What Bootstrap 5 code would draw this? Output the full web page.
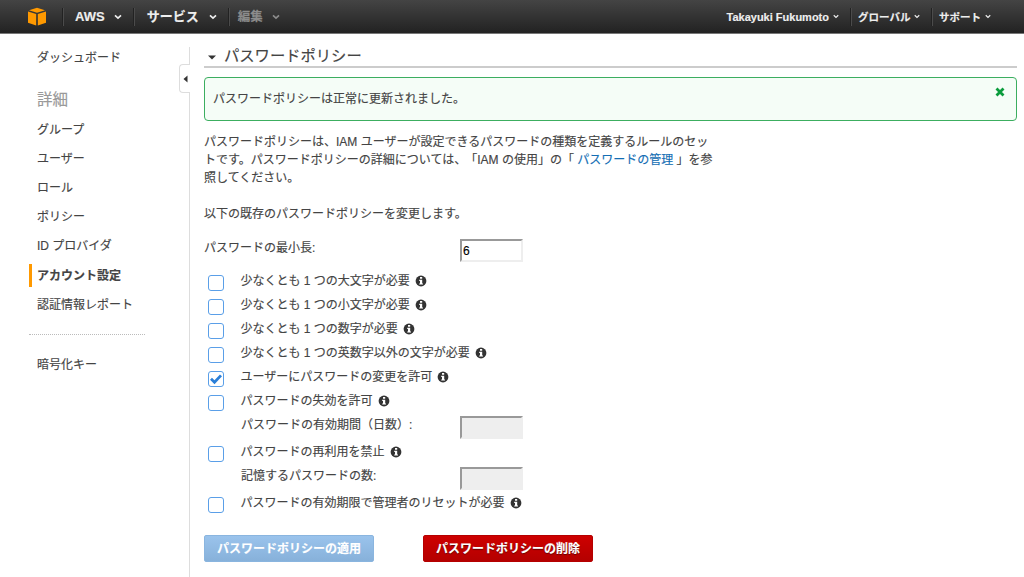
<!DOCTYPE html>
<html lang="ja">
<head>
<meta charset="utf-8">
<meta name="viewport" content="width=device-width, initial-scale=1">
<title>IAM - アカウント設定</title>
<link href="https://cdn.jsdelivr.net/npm/bootstrap@5.3.0/dist/css/bootstrap.min.css" rel="stylesheet">
<style>
body{font:12px/18px "Liberation Sans","Noto Sans CJK JP",sans-serif;color:#444;background:#fff;height:577px;overflow:hidden;-webkit-text-stroke:.15px}
.topbar{height:34px;background:linear-gradient(#444,#222);border-bottom:1px solid #777;padding:0 26px 0 27px;color:#eee;font-weight:700;flex-wrap:nowrap}
.topbar a{color:inherit;text-decoration:none;white-space:nowrap;height:18px;display:flex;align-items:center}
.logo-cell{width:35px;height:18px}
.main-link{font-size:13px;border-left:1px solid #222;box-shadow:inset 1px 0 #4b4b4b;padding-left:12px;padding-right:11px;gap:9px}
.menu-wide{padding-left:13px;gap:10px}
.acct-link{font-size:10.5px;color:#e8e8e8;gap:4px}
.acct-link:not(:first-child){border-left:1px solid #222;box-shadow:inset 1px 0 #4b4b4b;padding-left:7px;width:81px}
.acct-link:last-child{width:67px!important}
.acct-link.user{font-size:11px;padding-right:11px}
.topbar .muted{color:#8c8c8c;padding-left:9px;font-size:12.5px}
.side{width:189px;padding:14px 0 0 29px}
.side a{display:flex;align-items:center;height:29.2px;color:#444;text-decoration:none;padding-left:8px}
.side .first{height:20px;margin-bottom:21px}
.side h2{font-size:15.5px;font-weight:400;color:#999;margin:0;padding-left:8px;line-height:22px;height:24px;margin-bottom:2px}
.side .current{font-weight:700;position:relative}
.side .current::before{content:"";position:absolute;left:0;top:3px;width:3px;height:23px;background:#f90}
.side hr{width:116px;margin:15px 0 15px;border:0;border-top:1px dotted #bbb;opacity:1}
.rail{width:1px;margin-top:13px;background:#ddd;position:relative}
.collapse-tab{position:absolute;right:0;top:17px;width:11px;height:29px;border:1px solid #ddd;border-right:0;border-radius:4px 0 0 4px;background:#fff}
.panel{padding:10px 7px 0 14px}
.panel h1{font-size:15.3px;font-weight:400;line-height:22px;height:24px;margin:0 0 9px;border-bottom:2px solid #ccc;display:flex;align-items:center;color:#444}
.panel h1 span{padding-top:2px}
.notice{height:44px;border:1px solid #3cae60;border-radius:4px;background:#f5fdf7;padding:0 11px 0 8px;margin-bottom:12px;color:#444}
.line{white-space:nowrap}
.line a{color:#146eb4;text-decoration:none}
.quote-gap{margin-left:5px}
.opt{height:24px;display:flex}
.opt .box{width:16px;height:16px;margin:6px 17px 0 3.5px;flex:none;appearance:none;border:1px solid #5a9fe8;border-radius:3px;background:#fff}
.box:checked{background:#fff url("data:image/svg+xml,%3Csvg xmlns='http://www.w3.org/2000/svg' viewBox='0 0 14 14'%3E%3Cpath d='M2 6.8L5.5 10.2L12 3.4' fill='none' stroke='%232b7fd8' stroke-width='2.8'/%3E%3C/svg%3E") center/14px!important}
.opt label{line-height:18px;margin-top:3px;white-space:nowrap}
.opt svg{margin:6px 0 0 5px}
.num{width:63px;height:23px;border:2px solid;border-color:#999 #eee #eee #999;padding:1px;font-size:12px;line-height:18px;color:#000;background:#fff;border-radius:0}
.num:disabled{background:#eee}
.field-label{width:256px;flex:none}
.sub{padding-left:37px}
.sub .field-label{width:219px}
.act{width:170px;height:27px;border-radius:2px;font-weight:700;font-size:12px;line-height:18px;padding:1px 0 0;color:#fff;--bs-btn-color:#fff;text-shadow:0 1px 1px rgba(0,0,0,.5)}
.apply,.apply:disabled{background:linear-gradient(#9ac3ec,#87b1da);border:1px solid #8ab5df;color:#fff;opacity:1;text-shadow:none}
.remove{background:linear-gradient(#ce0000,#b40000);border:1px solid #b50000}
</style>
</head>
<body>
<svg class="d-none">
<symbol id="info" viewBox="0 0 12 12"><circle cx="6" cy="6" r="5.4" fill="#333"/><path d="M5 2h2.2v1.8H5zM4.2 4.7h3v3.7h.8v1.2H4.2V8.4H5V5.9h-.8z" fill="#fff"/></symbol>
<symbol id="chev" viewBox="0 0 8 6"><path d="M1 1.3L4 4.2L7 1.3" fill="none" stroke="currentColor" stroke-width="1.6"/></symbol>
</svg>
<nav class="navbar topbar d-flex justify-content-start">
  <a href="#" class="logo-cell"><svg width="20" height="20" viewBox="0 0 20 20" style="overflow:visible"><path d="M1 4.5L9.2 7v11.5L1 15.8zM10.8 7L19 4.5v11.3l-8.2 2.7zM2 3.3L10 .7l8 2.6L10 5.7z" fill="#f90"/></svg></a>
  <a href="#" class="main-link"><span>AWS</span><svg width="8" height="6"><use href="#chev"/></svg></a>
  <a href="#" class="main-link menu-wide"><span>サービス</span><svg width="8" height="6"><use href="#chev"/></svg></a>
  <a href="#" class="main-link muted"><span>編集</span><svg width="8" height="6"><use href="#chev"/></svg></a>
  <div class="d-flex ms-auto">
    <a href="#" class="acct-link user"><span>Takayuki Fukumoto</span><svg width="6" height="5"><use href="#chev"/></svg></a>
    <a href="#" class="acct-link"><span>グローバル</span><svg width="6" height="5"><use href="#chev"/></svg></a>
    <a href="#" class="acct-link"><span>サポート</span><svg width="6" height="5"><use href="#chev"/></svg></a>
  </div>
</nav>
<div class="d-flex" style="height:543px">
  <aside class="side flex-shrink-0">
    <a href="#" class="first">ダッシュボード</a>
    <h2>詳細</h2>
    <a href="#">グループ</a>
    <a href="#">ユーザー</a>
    <a href="#">ロール</a>
    <a href="#">ポリシー</a>
    <a href="#">ID プロバイダ</a>
    <a href="#" class="current">アカウント設定</a>
    <a href="#">認証情報レポート</a>
    <hr>
    <a href="#">暗号化キー</a>
  </aside>
  <div class="rail"><div class="collapse-tab d-flex align-items-center justify-content-end"><svg class="me-1" style="margin-right:2px!important" width="5" height="8" viewBox="0 0 5 8"><path d="M4.5 .5v7L.5 4z" fill="#333"/></svg></div></div>
  <main class="panel flex-grow-1">
    <h1><svg class="ms-1 me-2 mt-1" width="8" height="5" viewBox="0 0 8 5"><path d="M0 .5h8L4 4.5z" fill="#333"/></svg><span>パスワードポリシー</span></h1>
    <div class="notice d-flex align-items-center justify-content-between"><span>パスワードポリシーは正常に更新されました。</span><svg class="align-self-start" style="margin-top:9px" width="10" height="10" viewBox="0 0 10 10"><path d="M1.5 1.5l7 7M8.5 1.5l-7 7" stroke="#0a9c3c" stroke-width="2.8"/></svg></div>
    <div class="line">パスワードポリシーは、IAM ユーザーが設定できるパスワードの種類を定義するルールのセッ</div>
    <div class="line">トです。パスワードポリシーの詳細については、<span class="quote-gap">「IAM</span> の使用」の「 <a href="#">パスワードの管理</a> 」を参</div>
    <div class="line">照してください。</div>
    <div class="line" style="margin-top:18px">以下の既存のパスワードポリシーを変更します。</div>
    <div class="d-flex" style="height:46px;padding-top:16px"><label class="field-label">パスワードの最小長:</label><input class="num" value="6"></div>
    <div class="opt"><input type="checkbox" class="box"><label>少なくとも 1 つの大文字が必要</label><svg width="12" height="12"><use href="#info"/></svg></div>
    <div class="opt"><input type="checkbox" class="box"><label>少なくとも 1 つの小文字が必要</label><svg width="12" height="12"><use href="#info"/></svg></div>
    <div class="opt"><input type="checkbox" class="box"><label>少なくとも 1 つの数字が必要</label><svg width="12" height="12"><use href="#info"/></svg></div>
    <div class="opt"><input type="checkbox" class="box"><label>少なくとも 1 つの英数字以外の文字が必要</label><svg width="12" height="12"><use href="#info"/></svg></div>
    <div class="opt"><input type="checkbox" class="box" checked><label>ユーザーにパスワードの変更を許可</label><svg width="12" height="12"><use href="#info"/></svg></div>
    <div class="opt"><input type="checkbox" class="box"><label>パスワードの失効を許可</label><svg width="12" height="12"><use href="#info"/></svg></div>
    <div class="d-flex sub" style="height:26.5px;padding-top:3px"><label class="field-label">パスワードの有効期間（日数）:</label><input class="num" disabled></div>
    <div class="opt"><input type="checkbox" class="box"><label>パスワードの再利用を禁止</label><svg width="12" height="12"><use href="#info"/></svg></div>
    <div class="d-flex sub" style="height:27px;padding-top:3px"><label class="field-label">記憶するパスワードの数:</label><input class="num" disabled></div>
    <div class="opt"><input type="checkbox" class="box"><label>パスワードの有効期限で管理者のリセットが必要</label><svg width="12" height="12"><use href="#info"/></svg></div>
    <div class="d-flex" style="padding-top:20px;gap:49px"><button class="btn act apply" disabled>パスワードポリシーの適用</button><button class="btn act remove">パスワードポリシーの削除</button></div>
  </main>
</div>
<script src="https://cdn.jsdelivr.net/npm/bootstrap@5.3.0/dist/js/bootstrap.bundle.min.js"></script>
</body>
</html>
